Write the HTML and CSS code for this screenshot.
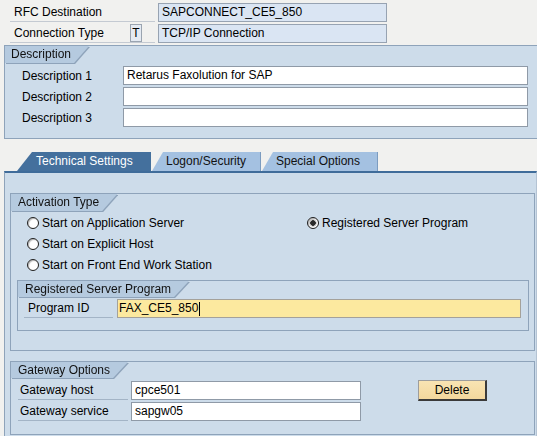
FILE: index.html
```html
<!DOCTYPE html>
<html>
<head>
<meta charset="utf-8">
<link rel="stylesheet" href="styles.css">
</head>
<body>
<div class="page">
  <div class="hdr">
    <div class="hrow">
      <span class="hlabel">RFC Destination</span>
      <span class="hfield">SAPCONNECT_CE5_850</span>
    </div>
    <div class="hrow">
      <span class="hlabel">Connection Type<span class="tbox">T</span></span>
      <span class="hfield">TCP/IP Connection</span>
    </div>
  </div>

  <div class="group desc">
    <div class="gt"><span class="gtitle">Description</span></div>
    <div class="drows">
      <div class="frow"><span class="dlabel">Description 1</span><span class="inp dinp">Retarus Faxolution for SAP</span></div>
      <div class="frow"><span class="dlabel">Description 2</span><span class="inp dinp"></span></div>
      <div class="frow"><span class="dlabel">Description 3</span><span class="inp dinp"></span></div>
    </div>
  </div>

  <div class="tabs">
    <span class="tab active">Technical Settings</span>
    <span class="tab t2">Logon/Security</span>
    <span class="tab t3">Special Options</span>
  </div>

  <div class="tabpanel">
    <div class="group act">
      <div class="gt"><span class="gtitle">Activation Type</span></div>
      <div class="radios">
        <div class="ropt"><span class="radio"></span>Start on Application Server</div>
        <div class="ropt"><span class="radio on"></span>Registered Server Program</div>
        <div class="ropt"><span class="radio"></span>Start on Explicit Host</div>
        <div class="ropt"></div>
        <div class="ropt"><span class="radio"></span>Start on Front End Work Station</div>
      </div>
      <div class="group sub">
        <div class="gt"><span class="gtitle">Registered Server Program</span></div>
        <div class="prow">
          <span class="ulabel plabel">Program ID</span>
          <span class="inp yinp">FAX_CE5_850<span class="caret"></span></span>
        </div>
      </div>
    </div>

    <div class="group gw">
      <div class="gt"><span class="gtitle">Gateway Options</span></div>
      <div class="gwbody">
        <div class="gwrows">
          <div class="frow"><span class="ulabel glabel">Gateway host</span><span class="inp ginp">cpce501</span></div>
          <div class="frow"><span class="ulabel glabel">Gateway service</span><span class="inp ginp">sapgw05</span></div>
        </div>
        <span class="btn">Delete</span>
      </div>
    </div>
  </div>
</div>
</body>
</html>
```

FILE: styles.css
```css
* { box-sizing: border-box; }
html, body { margin: 0; padding: 0; }
body { background: #f1f1ef; }

.page {
  width: 537px;
  height: 436px;
  overflow: hidden;
  background: #f1f1ef;
  font: 12px "Liberation Sans", Arial, sans-serif;
  color: #000;
}

/* header */
.hdr {
  height: 45px;
  padding: 3px 0 0 10px;
  display: flex;
  flex-direction: column;
  gap: 2px;
}
.hrow { display: flex; height: 19px; }
.hlabel {
  width: 145px;
  height: 19px;
  display: flex;
  align-items: center;
  padding-left: 4px;
  border-bottom: 1px solid #c4cad2;
}
.tbox {
  margin-left: auto;
  margin-right: 13px;
  width: 12px;
  height: 18px;
  border: 1px solid #9aa4b0;
  background: #e4eaf2;
  text-align: center;
  line-height: 16px;
}
.hfield {
  margin-left: 3px;
  width: 229px;
  height: 19px;
  background: #dae5f3;
  border: 1px solid #97a3b2;
  padding-left: 3px;
  line-height: 17px;
}

/* groups */
.group {
  border: 1px solid #8ea3ba;
  background: #cddcea;
}
.gt { filter: drop-shadow(1px 1px 0 #8ea3ba); height: 17px; }
.gtitle {
  display: inline-block;
  height: 17px;
  line-height: 17px;
  padding: 0 18px 0 6px;
  background: #b5cadf;
  color: #111;
  clip-path: polygon(0 0, 100% 0, calc(100% - 15px) 100%, 0 100%);
}

.desc {
  margin-left: 4px;
  height: 94px;
  border-right: none;
}
.drows {
  padding: 3px 0 0 17px;
  display: flex;
  flex-direction: column;
  gap: 2px;
}
.frow { display: flex; align-items: center; height: 19px; }
.dlabel { width: 101px; }
.inp {
  height: 19px;
  background: #fff;
  border: 1px solid #8f9aa7;
  padding-left: 3px;
  line-height: 17px;
}
.dinp { width: 405px; }

/* tabs */
.tabs {
  margin-top: 13px;
  height: 19px;
  display: flex;
  padding-left: 17px;
  gap: 1px;
}
.tab {
  height: 19px;
  line-height: 19px;
  background: #a4c1e1;
  color: #111;
  clip-path: polygon(11px 0, 100% 0, 100% 100%, 0 100%);
  box-shadow: inset -1px 0 0 #7c9cc0;
}
.tab.active {
  width: 134px;
  padding-left: 19px;
  background: #44709d;
  color: #fff;
  box-shadow: none;
  clip-path: polygon(15px 0, 100% 0, 100% 100%, 0 100%);
}
.t2 { width: 109px; padding-left: 14px; }
.t3 { width: 116px; padding-left: 14px; }

.tabpanel {
  margin-left: 4px;
  width: 533px;
  height: 300px;
  border-left: 1px solid #8ea3ba;
  border-right: 1px solid #b4c3d3;
  border-top: 2px solid #3f6c9a;
  background: #cddcea;
  padding: 20px 0 0 5px;
}

.act { width: 525px; height: 158px; }
.radios {
  padding: 1px 0 0 16px;
  display: grid;
  grid-template-columns: 280px auto;
  grid-auto-rows: 21px;
}
.ropt { display: flex; align-items: center; }
.radio {
  width: 12px;
  height: 12px;
  border-radius: 50%;
  border: 1px solid #1e1e1e;
  background: #fff;
  box-shadow: inset 1px 1px 1px #b8b8b8;
  margin-right: 3px;
}
.radio.on {
  background: radial-gradient(circle, #2a2a2a 0 2.5px, #d0d0d0 3px 3.5px, #fff 4px);
}

.sub {
  margin: 5px 0 0 6px;
  width: 512px;
  height: 51px;
}
.sub .gt, .sub .gtitle { height: 16px; line-height: 16px; }
.sub .gtitle { padding-left: 7px; }
.prow {
  display: flex;
  align-items: center;
  padding: 2px 0 0 6px;
  height: 21px;
}
.ulabel {
  height: 19px;
  line-height: 18px;
  border-bottom: 1px solid #a3b4c6;
}
.plabel { width: 89px; padding-left: 4px; }
.yinp {
  margin-left: 4px;
  width: 404px;
  background: #fce99f;
  border-color: #a4a19a;
  padding-left: 1px;
  display: flex;
  align-items: center;
}
.caret {
  display: inline-block;
  width: 1px;
  height: 14px;
  background: #000;
  margin-left: 1px;
}

.act .gtitle, .gw .gtitle { padding-left: 7px; }

.gw {
  margin-top: 10px;
  width: 525px;
  height: 74px;
}
.gw .gt, .gw .gtitle { height: 16px; line-height: 16px; }
.gwbody { display: flex; padding: 3px 0 0 7px; }
.gwrows { display: flex; flex-direction: column; gap: 2px; }
.glabel { width: 110px; padding-left: 2px; }
.ginp { margin-left: 3px; width: 230px; }
.btn {
  margin: -1px 0 0 57px;
  width: 69px;
  height: 21px;
  line-height: 18px;
  text-align: center;
  background: linear-gradient(#f9e4b3, #f3d79d);
  border: 1px solid #9d9d9d;
  border-right: 2px solid #3a3a3a;
  border-bottom: 2px solid #3a3a3a;
  color: #000;
}
```
